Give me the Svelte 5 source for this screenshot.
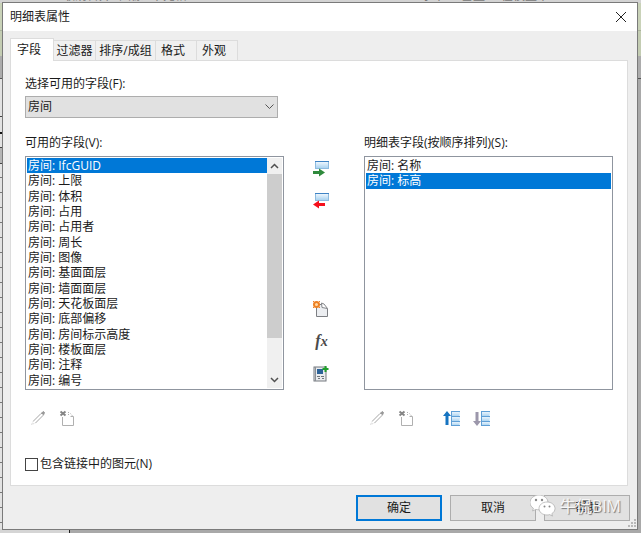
<script lang="ts">
  type Tab = { id: string; label: string; width: string };

  const tabs: Tab[] = [
    { id: 'fields', label: '字段', width: 'narrow' },
    { id: 'filter', label: '过滤器', width: 'narrow' },
    { id: 'sort', label: '排序/成组', width: 'wide' },
    { id: 'format', label: '格式', width: 'narrow' },
    { id: 'look', label: '外观', width: 'narrow' }
  ];

  const available = [
    'IfcGUID', '上限', '体积', '占用', '占用者', '周长', '图像', '基面面层',
    '墙面面层', '天花板面层', '底部偏移', '房间标示高度', '楼板面层', '注释', '编号'
  ];
  const scheduled = ['名称', '标高'];

  let activeTab = $state('fields');
  let selectedAvailable = $state('IfcGUID');
  let selectedScheduled = $state('标高');
  let includeLinks = $state(false);
</script>

{#snippet pencil()}
  <svg width="16" height="16" viewBox="0 0 16 16" fill="none" stroke="#a6a6a6">
    <path d="M3.5 11 11 3.5M5.500 13 13.500 5" />
    <path d="M11 3.500 13.500 1.500 14.500 2.500 13.500 5" fill="#999" stroke="#999" />
    <path d="M3.500 11 1.500 14.500 5.500 13" stroke="#ccc" stroke-dasharray="1 1" />
  </svg>
{/snippet}

{#snippet removeItem()}
  <svg width="16" height="16" viewBox="0 0 16 16" fill="none">
    <path d="M1.500 1.500 6.500 5.500M6.500 1.500 1.500 5.500" stroke="#858585" stroke-width="2" />
    <path d="M3.500 7V15.500H14.500V6.500H11.500" stroke="#b0b0b0" />
    <path d="M9.500 2V6M11.500 3.500 13.500 6" stroke="#b0b0b0" stroke-dasharray="1 1" />
  </svg>
{/snippet}

{#snippet rows()}
  <rect x="8.500" y=".5" width="8" height="5" fill="url(#bar)" stroke="#5f9fd6" />
  <rect x="8.500" y="5.500" width="8" height="5" fill="url(#bar)" stroke="#5f9fd6" />
  <rect x="8.500" y="10.500" width="8" height="4" fill="url(#bar)" stroke="#5f9fd6" />
  <path d="M16.500 1V5M16.500 6V10M16.500 11V14" stroke="#d6ebfa" />
{/snippet}

<svg class="defs" width="0" height="0" aria-hidden="true">
  <defs>
    <linearGradient id="bar" x1="0" y1="0" x2="0" y2="1">
      <stop offset="0" stop-color="#f2f9ff" />
      <stop offset="1" stop-color="#a5d0ef" />
    </linearGradient>
  </defs>
</svg>

<div class="desktop">
  <div class="backdrop" aria-hidden="true">
    <div class="ribbon">
      <span>取消合并</span><span>图像</span><span>单元格</span>
      <span class="push">水平</span><span class="spaced">垂直</span><span>在模型中</span>
    </div>
    <div class="green"></div>
    <div class="grey"></div>
    <div class="sheet"></div>
    <div class="status"></div>
  </div>

  <div class="dialog" role="dialog" aria-labelledby="title">
    <header>
      <h1 id="title">明细表属性</h1>
      <button class="close" aria-label="关闭">
        <svg width="10" height="10" viewBox="0 0 10 10" stroke="#222" fill="none">
          <path d="M0 0 10 10M10 0 0 10" />
        </svg>
      </button>
    </header>

    <div class="body">
      <div class="tabs" role="tablist">
        {#each tabs as tab}
          <button
            role="tab"
            class="tab {tab.width}"
            class:active={activeTab === tab.id}
            aria-selected={activeTab === tab.id}
            onclick={() => (activeTab = tab.id)}
          >{tab.label}</button>
        {/each}
      </div>

      <div class="panel" role="tabpanel">
        <label class="caption" for="source">选择可用的字段(F):</label>
        <div class="picker">
          <select id="source">
            <option>房间</option>
          </select>
          <svg class="arrow" width="9" height="6" viewBox="0 0 9 6" fill="none" stroke="#555">
            <path d="M.5 .5 4.500 4.500 8.500 .5" />
          </svg>
        </div>

        <div class="columns">
          <div class="column">
            <div class="caption" id="available">可用的字段(V):</div>
            <div class="listbox">
              <ul role="listbox" aria-labelledby="available">
                {#each available as field}
                  <li role="option" aria-selected={selectedAvailable === field}>
                    <button class:selected={selectedAvailable === field} onclick={() => (selectedAvailable = field)}>房间: {field}</button>
                  </li>
                {/each}
              </ul>
              <div class="scrollbar">
                <button aria-label="向上滚动">
                  <svg width="9" height="6" viewBox="0 0 9 6" fill="none" stroke="#505050" stroke-width="1.500">
                    <path d="M1 5 4.500 1.500 8 5" />
                  </svg>
                </button>
                <div class="track"><div class="thumb"></div></div>
                <button aria-label="向下滚动">
                  <svg width="9" height="6" viewBox="0 0 9 6" fill="none" stroke="#505050" stroke-width="1.500">
                    <path d="M1 1 4.500 4.500 8 1" />
                  </svg>
                </button>
              </div>
            </div>
            <div class="tools">
              <button aria-label="编辑">{@render pencil()}</button>
              <button aria-label="删除">{@render removeItem()}</button>
            </div>
          </div>

          <div class="transfer">
            <button aria-label="添加">
              <svg width="16" height="16" viewBox="0 0 16 16">
                <rect x="2.500" y=".5" width="13" height="7" fill="url(#bar)" stroke="#8dbbe0" />
                <path d="M2 .5H16" stroke="#3f83c4" />
                <path d="M0 10H6V7.500L12 11.500 6 15.500V13H0Z" fill="#2f8a3c" />
              </svg>
            </button>
            <button aria-label="移除">
              <svg width="16" height="16" viewBox="0 0 16 16">
                <rect x="2.500" y=".5" width="13" height="7" fill="url(#bar)" stroke="#8dbbe0" />
                <path d="M2 .5H16" stroke="#3f83c4" />
                <path d="M12 10H6V7.500L0 11.500 6 15.500V13H12Z" fill="#f5101c" />
              </svg>
            </button>
            <button class="gap" aria-label="新建参数">
              <svg width="16" height="16" viewBox="0 0 16 16">
                <path d="M3.500 3.500H10L14.500 8V15.500H3.500Z" fill="#eceef1" stroke="#7d7f83" />
                <path d="M8.500 2 9 6.500 14.500 7.500 11 3Z" fill="#fff" stroke="#85878b" />
                <circle cx="3.500" cy="3.500" r="2.500" fill="#ffd9a6" stroke="#ee8124" stroke-width="2" />
                <path d="M0 0 1 1M7 0 6 1M0 7 1 6M7 7 6 6" stroke="#ee8124" />
              </svg>
            </button>
            <button aria-label="计算参数"><i class="fx">f<small>x</small></i></button>
            <button aria-label="合并参数">
              <svg width="16" height="16" viewBox="0 0 16 16">
                <rect x="1" y="1" width="12" height="14" fill="#e9ebee" stroke="#74797f" />
                <path d="M2.500 1V15" stroke="#8b9096" />
                <rect x="4" y="3" width="6" height="5" fill="#2c6298" />
                <path d="M4 10.500H7M8 10.500H11M5 12.500H7M9 12.500H11" stroke="#6f747a" />
                <path d="M12.500 0V6M9.500 3H15.500" stroke="#1fa02b" stroke-width="2" />
              </svg>
            </button>
          </div>

          <div class="column">
            <div class="caption" id="scheduled">明细表字段(按顺序排列)(S):</div>
            <div class="listbox">
              <ul role="listbox" aria-labelledby="scheduled">
                {#each scheduled as field}
                  <li role="option" aria-selected={selectedScheduled === field}>
                    <button class:selected={selectedScheduled === field} onclick={() => (selectedScheduled = field)}>房间: {field}</button>
                  </li>
                {/each}
              </ul>
            </div>
            <div class="tools">
              <button aria-label="编辑">{@render pencil()}</button>
              <button aria-label="删除">{@render removeItem()}</button>
              <button class="order" aria-label="上移">
                <svg width="17" height="15" viewBox="0 0 17 15">
                  {@render rows()}
                  <path d="M4 0 8 5H5.500V14H2.500V5H0Z" fill="#1674c1" />
                </svg>
              </button>
              <button aria-label="下移">
                <svg width="17" height="15" viewBox="0 0 17 15">
                  {@render rows()}
                  <path d="M4 15 8 10H5.500V1H2.500V10H0Z" fill="#9c97ab" />
                </svg>
              </button>
            </div>
          </div>
        </div>

        <label class="check">
          <input type="checkbox" bind:checked={includeLinks} />
          包含链接中的图元(N)
        </label>
      </div>

      <footer>
        <button class="default">确定</button>
        <button>取消</button>
        <button>帮助</button>
      </footer>
    </div>

    <svg class="grip" width="9" height="9" viewBox="0 0 9 9" fill="#b8b8b8" aria-hidden="true">
      <path d="M6 0h2v2H6zM3 3h2v2H3zM6 3h2v2H6zM0 6h2v2H0zM3 6h2v2H3zM6 6h2v2H6z" />
    </svg>

    <div class="watermark">
      <svg width="26" height="22" viewBox="0 0 26 22">
        <path d="M9 0C4 0 0 3.500 0 7.500c0 2.500 1.300 4.500 3.400 5.800L2.600 16l3.200-1.600c1 .3 2 .4 3.200.4 5 0 9-3.300 9-7.300S14 0 9 0Z" fill="#fff" stroke="#a9a9a9" stroke-width=".7" />
        <path d="M17 7c-4.500 0-8 2.900-8 6.500S12.500 20 17 20c1 0 1.900-.1 2.700-.4l2.800 1.500-.7-2.400c1.900-1.200 3.200-3 3.200-5.200C25 9.900 21.500 7 17 7Z" fill="#fff" stroke="#a9a9a9" stroke-width=".7" />
        <g fill="#888">
          <circle cx="6" cy="5" r="1.200" /><circle cx="12" cy="5" r="1.200" />
          <circle cx="14.500" cy="11.500" r="1" /><circle cx="19.500" cy="11.500" r="1" />
        </g>
      </svg>
      <span>牛侃BIM</span>
    </div>
  </div>
</div>

<style>
  :global(body) {
    background: #b0b0b0;
  }

  .desktop {
    position: relative;
    box-sizing: border-box;
    min-height: 100vh;
    padding: 2px 3px 3px 2px;
    font: 12px/16px "Open Sans", "Noto Sans CJK SC", sans-serif;
    color: #1a1a1a;
  }

  .defs {
    position: absolute;
  }

  .backdrop {
    position: absolute;
    inset: 0;
    display: flex;
    flex-direction: column;
    overflow: hidden;
  }

  .ribbon {
    display: flex;
    align-items: flex-end;
    gap: 8px;
    height: 3px;
    padding: 0 92px 0 63px;
    background: #d3d3d3;
    color: #777;
    line-height: 14px;
  }

  .push {
    margin-left: auto;
  }

  .spaced {
    margin: 0 8px;
  }

  .green {
    height: 53px;
    background: linear-gradient(#c9d2b8 27px, #aab39c 27px, #aab39c 28px, #c3ccb2 28px);
  }

  .grey {
    height: 22px;
    background: #acacac;
    border-bottom: 1px solid #555;
  }

  .sheet {
    flex: 1;
    background:
      linear-gradient(#e2e2e2 37px, #444 37px, #444 38px, #e2e2e2 38px, #e2e2e2 53px, #111 53px, #111 55px, #e2e2e2 55px, #e2e2e2 68px, #444 68px, #444 69px, #b5b5b5 69px, #b5b5b5 84px, #444 84px) 0 0 / 3px 85px no-repeat,
      repeating-linear-gradient(#777 0 1px, #e2e2e2 1px 15px) 0 8px / 3px 100% no-repeat,
      #a9a9a9;
  }

  .status {
    height: 4px;
    background: linear-gradient(90deg, #d5d5d5 69px, #222 69px, #222 70px, #a9a9a9 70px);
  }

  .dialog {
    position: relative;
    border: 1px solid #7a7a7a;
    background: #eee;
  }

  header {
    display: flex;
    align-items: center;
    justify-content: space-between;
    height: 28px;
    padding: 0 11px 0 7px;
    background: #fff;
  }

  h1 {
    margin: 0;
    font-size: 12px;
    font-weight: 400;
  }

  button {
    padding: 0;
    border: 0;
    background: none;
    font: inherit;
    color: inherit;
  }

  svg {
    display: block;
  }

  .body {
    padding: 7px 7px 8px;
  }

  .tabs {
    display: flex;
    align-items: flex-end;
  }

  .tab {
    height: 20px;
    width: 41px;
    border: 1px solid #dcdcdc;
    border-width: 1px 1px 0 0;
    background: #f0f0f0;
    padding-right: 6px;
    white-space: nowrap;
  }

  .tab:nth-child(2) {
    padding-right: 0;
    width: 42px;
  }

  .tab.wide {
    width: 60px;
    padding-right: 0;
  }

  .tab.active {
    position: relative;
    width: 44px;
    height: 23px;
    margin-bottom: -1px;
    border-left-width: 1px;
    background: #fff;
  }

  .panel {
    margin-right: 2px;
    padding: 15px 14px 13px;
    border: 1px solid #dcdcdc;
    background: #fff;
  }

  .caption {
    display: block;
    line-height: 16px;
  }

  .picker {
    position: relative;
    width: 43%;
    margin: 4px 0 17px;
  }

  select {
    display: block;
    appearance: none;
    width: 100%;
    height: 22px;
    padding: 0 2px;
    border: 1px solid #adadad;
    border-radius: 0;
    background: #e1e1e1;
    font: inherit;
    color: inherit;
  }

  .arrow {
    position: absolute;
    right: 4px;
    top: 8px;
    pointer-events: none;
  }

  .columns {
    display: grid;
    grid-template-columns: 26fr 80px 25fr;
  }

  .column {
    min-width: 0;
  }

  .listbox {
    display: flex;
    height: 234px;
    box-sizing: border-box;
    margin-top: 5px;
    padding: 1px;
    border: 1px solid #8f959f;
  }

  ul {
    flex: 1;
    display: grid;
    grid-template-rows: repeat(15, 1fr);
    margin: 0;
    padding: 0;
    list-style: none;
  }

  li {
    display: flex;
    min-height: 0;
  }

  li button {
    flex: 1;
    padding-left: 1px;
    line-height: 15px;
    text-align: left;
  }

  .selected {
    background: #0078d7;
    color: #fff;
  }

  .scrollbar {
    display: flex;
    flex-direction: column;
    width: 15px;
    background: #f0f0f0;
  }

  .scrollbar button {
    display: grid;
    place-items: center;
    height: 16px;
  }

  .track {
    flex: 1;
  }

  .thumb {
    height: 83%;
    background: #cdcdcd;
  }

  .tools {
    display: flex;
    gap: 13px;
    align-items: center;
    padding: 20px 0 0 5px;
    height: 16px;
  }

  .order {
    margin-left: 16px;
  }

  .transfer {
    display: flex;
    flex-direction: column;
    align-items: center;
    gap: 16px;
    padding: 26px 5px 0 0;
  }

  .gap {
    margin-top: 76px;
  }

  .fx {
    display: block;
    font: italic bold 16px/16px "Liberation Serif", serif;
    color: #4a4a4a;
  }

  .fx small {
    font-size: 14px;
  }

  .check {
    display: flex;
    align-items: center;
    gap: 2px;
    margin-top: 30px;
  }

  .check input {
    appearance: none;
    width: 13px;
    height: 13px;
    margin: 0;
    border: 1px solid #444;
    background: #fff;
  }

  .check input:checked {
    background: #0078d7;
  }

  footer {
    display: flex;
    justify-content: flex-end;
    gap: 8px;
    margin-top: 9px;
  }

  footer button {
    width: 86px;
    height: 26px;
    border: 1px solid #adadad;
    background: #e1e1e1;
  }

  footer .default {
    border: 2px solid #0078d7;
  }

  .grip {
    position: absolute;
    right: 0;
    bottom: 1px;
  }

  .watermark {
    position: absolute;
    right: 16px;
    bottom: 12px;
    display: flex;
    align-items: center;
    gap: 4px;
    font: 16px/22px "Open Sans", "Noto Sans CJK SC", sans-serif;
    color: #f6f6f6;
    text-shadow: 1px 1px 1px #777;
    pointer-events: none;
  }
</style>
